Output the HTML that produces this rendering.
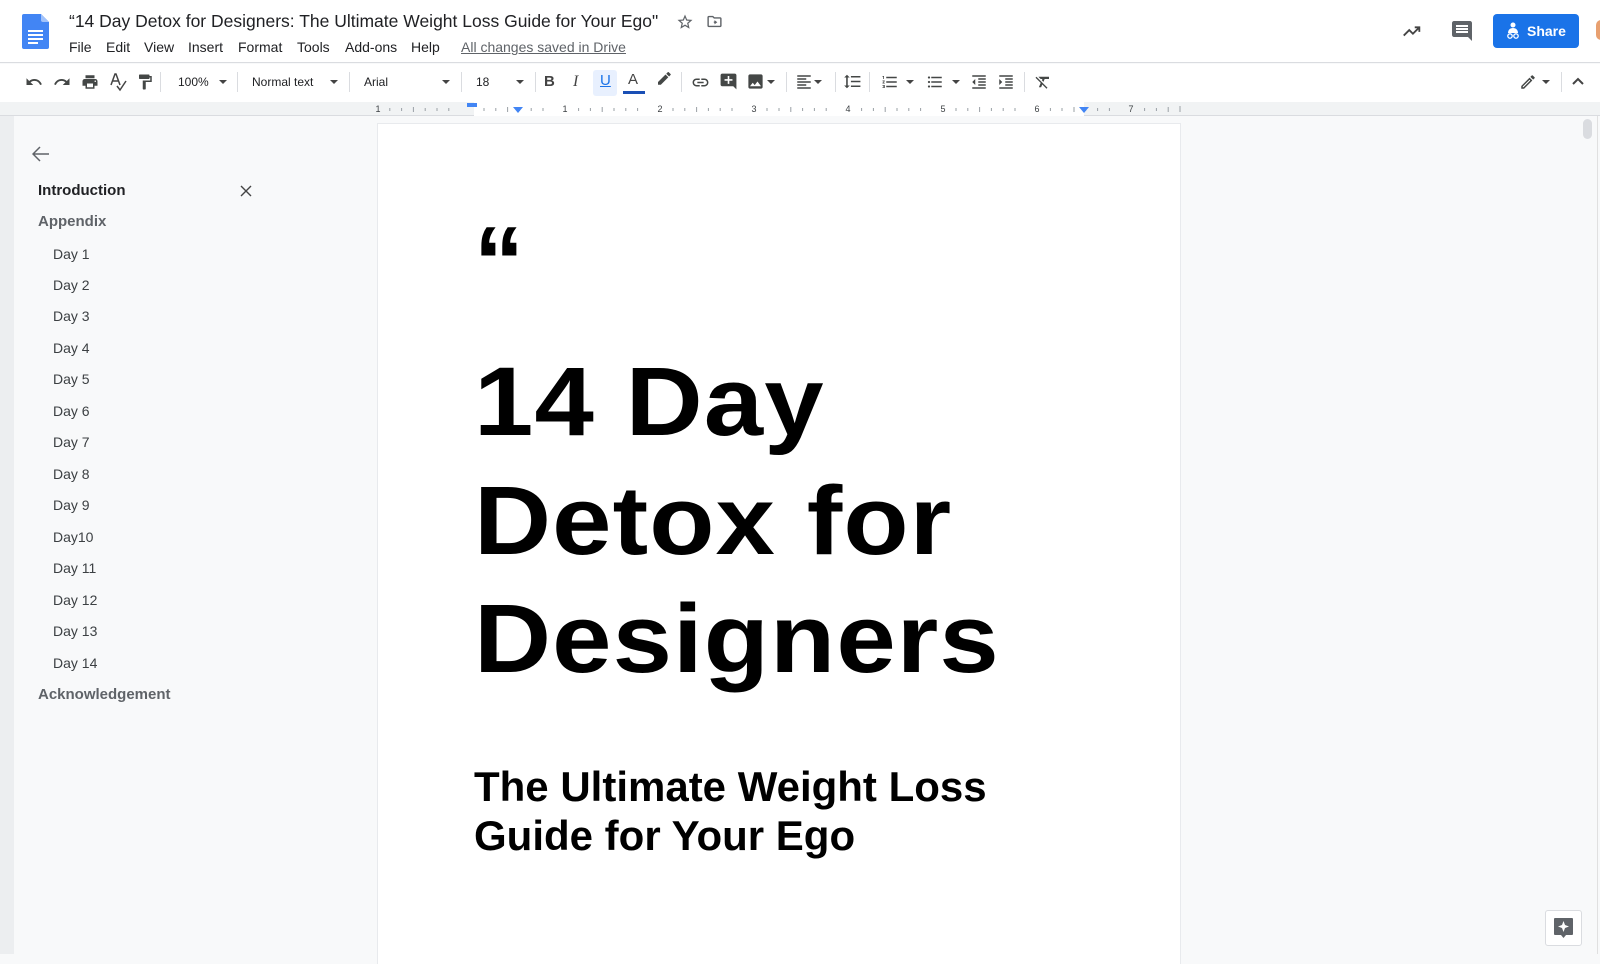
<!DOCTYPE html>
<html><head><meta charset="utf-8">
<style>
*{margin:0;padding:0;box-sizing:border-box}
body{width:1600px;height:954px;overflow:hidden;background:#f8f9fa;font-family:"Liberation Sans",Arial,sans-serif;position:relative;color:#202124}
.a{position:absolute}
.hdr{left:0;top:0;width:1600px;height:63px;background:#fff;border-bottom:1px solid #dadce0}
.tb{left:0;top:64px;width:1600px;height:38px;background:#fff}
.ic{position:absolute;fill:#444746}
.sep{position:absolute;top:72px;width:1px;height:20px;background:#dadce0}
.dd{position:absolute;top:80px;width:0;height:0;border-left:4px solid transparent;border-right:4px solid transparent;border-top:4px solid #444}
.tt{position:absolute;top:75px;font-size:12px;color:#202124}
.menu{position:absolute;top:39px;font-size:14px;color:#202124}
.ruler{left:0;top:102px;width:1600px;height:14px;background:#f1f3f4;border-bottom:1px solid #dadce0}
.sb{position:absolute;font-size:14px;color:#3c4043}
.h{position:absolute;font-size:15px;color:#5f6368;font-weight:bold}
.big{position:absolute;left:474px;font-weight:bold;font-size:97px;color:#000;line-height:1;white-space:nowrap;letter-spacing:1px;transform:scaleX(1.1);transform-origin:0 0}
.sub{position:absolute;left:474px;font-weight:bold;font-size:42px;color:#000;line-height:1;white-space:nowrap}
</style></head><body>
<div class="a hdr"></div>
<svg class="a" style="left:22px;top:14px" width="27" height="35" viewBox="0 0 27 35"><path d="M2 0h17l8 8v25a2 2 0 0 1-2 2H2a2 2 0 0 1-2-2V2a2 2 0 0 1 2-2z" fill="#4285f4"/><path d="M19 0l8 8h-6a2 2 0 0 1-2-2z" fill="#a1c2fa"/><rect x="6" y="16" width="15" height="2" fill="#fff"/><rect x="6" y="20" width="15" height="2" fill="#fff"/><rect x="6" y="24" width="15" height="2" fill="#fff"/><rect x="6" y="28" width="10" height="2" fill="#fff"/></svg>
<div class="a" style="left:69px;top:11px;font-size:17.5px;color:#202124;white-space:nowrap">“14 Day Detox for Designers: The Ultimate Weight Loss Guide for Your Ego"</div>
<svg class="a" style="left:676px;top:13px" width="18" height="18" viewBox="0 0 24 24"><path d="M22 9.24l-7.19-.62L12 2 9.19 8.63 2 9.24l5.46 4.73L5.82 21 12 17.27 18.18 21l-1.63-7.03L22 9.24zM12 15.4l-3.76 2.27 1-4.28-3.32-2.88 4.38-.38L12 6.1l1.71 4.04 4.38.38-3.32 2.88 1 4.28L12 15.4z" fill="#5f6368"/></svg>
<svg class="a" style="left:706px;top:13px" width="17" height="17" viewBox="0 0 24 24"><path d="M20 6h-8l-2-2H4c-1.1 0-2 .9-2 2v12c0 1.1.9 2 2 2h16c1.1 0 2-.9 2-2V8c0-1.1-.9-2-2-2zm0 12H4V6h5.17l2 2H20v10zm-8-4h-1v-2h1V10l4 3-4 3z" fill="#5f6368"/></svg>
<div class="menu" style="left:69px">File</div>
<div class="menu" style="left:106px">Edit</div>
<div class="menu" style="left:144px">View</div>
<div class="menu" style="left:188px">Insert</div>
<div class="menu" style="left:238px">Format</div>
<div class="menu" style="left:297px">Tools</div>
<div class="menu" style="left:345px">Add-ons</div>
<div class="menu" style="left:411px">Help</div>
<div class="menu" style="left:461px;color:#5f6368;text-decoration:underline">All changes saved in Drive</div>
<svg class="a" style="left:1401px;top:20px" width="22" height="22" viewBox="0 0 24 24"><path d="M3 17l6-6 4 4 7-7M15 8h5v5" fill="none" stroke="#444" stroke-width="2"/></svg>
<svg class="a" style="left:1450px;top:19px" width="24" height="24" viewBox="0 0 24 24"><path d="M21.99 4c0-1.1-.89-2-1.99-2H4c-1.1 0-2 .9-2 2v12c0 1.1.9 2 2 2h14l4 4-.01-18zM18 14H6v-2h12v2zm0-3H6V9h12v2zm0-3H6V6h12v2z" fill="#5f6368"/></svg>
<div class="a" style="left:1493px;top:14px;width:86px;height:34px;background:#1a73e8;border-radius:4px;color:#fff;font-weight:bold;font-size:14px;line-height:34px;padding-left:34px">Share</div>
<svg class="a" style="left:1505px;top:22px" width="16" height="18" viewBox="0 0 16 18"><circle cx="8" cy="3" r="2.5" fill="#fff"/><path d="M3 11c0-3 2-5 5-5s5 2 5 5z" fill="#fff"/><circle cx="5" cy="14" r="2.2" fill="none" stroke="#fff" stroke-width="1.3"/><circle cx="11" cy="14" r="2.2" fill="none" stroke="#fff" stroke-width="1.3"/></svg>
<div class="a" style="left:1596px;top:20px;width:10px;height:20px;border-radius:10px;background:#e8a070"></div>

<div class="a tb"></div>
<svg class="ic" style="left:25px;top:73px" width="18" height="18" viewBox="0 0 24 24"><path d="M12.5 8c-2.65 0-5.05.99-6.9 2.6L2 7v9h9l-3.62-3.62c1.39-1.16 3.16-1.88 5.12-1.88 3.54 0 6.55 2.31 7.6 5.5l2.37-.78C21.08 11.03 17.15 8 12.5 8z"/></svg>
<svg class="ic" style="left:53px;top:73px" width="18" height="18" viewBox="0 0 24 24"><path d="M18.4 10.6C16.55 8.99 14.15 8 11.5 8c-4.65 0-8.58 3.03-9.96 7.22L3.9 16c1.05-3.19 4.05-5.5 7.6-5.5 1.95 0 3.73.72 5.12 1.88L13 16h9V7l-3.6 3.6z"/></svg>
<svg class="ic" style="left:81px;top:73px" width="18" height="18" viewBox="0 0 24 24"><path d="M19 8H5c-1.66 0-3 1.34-3 3v6h4v4h12v-4h4v-6c0-1.66-1.34-3-3-3zm-3 11H8v-5h8v5zm3-7c-.55 0-1-.45-1-1s.45-1 1-1 1 .45 1 1-.45 1-1 1zm-1-9H6v4h12V3z"/></svg>
<svg class="a" style="left:109px;top:72px" width="18" height="20" viewBox="0 0 18 20"><path d="M2 13L6 2h1l4 11M3.5 9h6M8 14l3 4 6-9" fill="none" stroke="#444" stroke-width="1.5"/></svg>
<svg class="ic" style="left:136px;top:73px" width="18" height="18" viewBox="0 0 24 24"><path d="M18 4V3c0-.55-.45-1-1-1H5c-.55 0-1 .45-1 1v4c0 .55.45 1 1 1h12c.55 0 1-.45 1-1V6h1v4H9v11c0 .55.45 1 1 1h2c.55 0 1-.45 1-1v-9h8V4h-3z"/></svg>
<div class="sep" style="left:160px"></div>
<div class="tt" style="left:178px">100%</div><div class="dd" style="left:219px"></div>
<div class="sep" style="left:237px"></div>
<div class="tt" style="left:252px">Normal text</div><div class="dd" style="left:330px"></div>
<div class="sep" style="left:349px"></div>
<div class="tt" style="left:364px">Arial</div><div class="dd" style="left:442px"></div>
<div class="sep" style="left:461px"></div>
<div class="tt" style="left:476px">18</div><div class="dd" style="left:516px"></div>
<div class="sep" style="left:535px"></div>
<div class="a" style="left:544px;top:73px;font-weight:bold;font-size:15px;color:#444">B</div>
<div class="a" style="left:573px;top:73px;font-style:italic;font-size:16px;color:#444;font-family:'Liberation Serif',serif">I</div>
<div class="a" style="left:593px;top:70px;width:24px;height:26px;background:#e8f0fe;border-radius:3px"></div>
<div class="a" style="left:600px;top:72px;font-size:15px;color:#1a73e8;text-decoration:underline">U</div>
<div class="a" style="left:628px;top:71px;font-size:15px;color:#444">A</div>
<div class="a" style="left:623px;top:91px;width:22px;height:3px;background:#1a4fb5"></div>
<svg class="ic" style="left:655px;top:72px" width="18" height="18" viewBox="0 0 24 24"><path d="M17.75 7L14 3.25l-10 10V17h3.75l10-10zm2.96-2.96a.996.996 0 0 0 0-1.41L18.37.29a.996.996 0 0 0-1.41 0L15 2.25 18.75 6l1.96-1.96z"/></svg>
<div class="sep" style="left:681px"></div>
<svg class="ic" style="left:691px;top:73px" width="19" height="19" viewBox="0 0 24 24"><path d="M3.9 12c0-1.71 1.39-3.1 3.1-3.1h4V7H7c-2.76 0-5 2.24-5 5s2.24 5 5 5h4v-1.9H7c-1.71 0-3.1-1.39-3.1-3.1zM8 13h8v-2H8v2zm9-6h-4v1.9h4c1.71 0 3.1 1.39 3.1 3.1s-1.39 3.1-3.1 3.1h-4V17h4c2.76 0 5-2.24 5-5s-2.24-5-5-5z"/></svg>
<svg class="ic" style="left:719px;top:72px" width="19" height="19" viewBox="0 0 24 24"><path d="M20 2H4c-1.1 0-2 .9-2 2v12c0 1.1.9 2 2 2h14l4 4V4c0-1.1-.9-2-2-2zm-3 9h-4v4h-2v-4H7V9h4V5h2v4h4v2z"/></svg>
<svg class="ic" style="left:746px;top:72px" width="19" height="19" viewBox="0 0 24 24"><path d="M21 19V5c0-1.1-.9-2-2-2H5c-1.1 0-2 .9-2 2v14c0 1.1.9 2 2 2h14c1.1 0 2-.9 2-2zM8.5 13.5l2.5 3.01L14.5 12l4.5 6H5l3.5-4.5z"/></svg>
<div class="dd" style="left:767px"></div>
<div class="sep" style="left:786px"></div>
<svg class="ic" style="left:795px;top:73px" width="18" height="18" viewBox="0 0 24 24"><path d="M15 15H3v2h12v-2zm0-8H3v2h12V7zM3 13h18v-2H3v2zm0 8h18v-2H3v2zM3 3v2h18V3H3z"/></svg>
<div class="dd" style="left:814px"></div>
<div class="sep" style="left:835px"></div>
<svg class="ic" style="left:843px;top:72px" width="19" height="19" viewBox="0 0 24 24"><path d="M6 7h2.5L5 3.5 1.5 7H4v10H1.5L5 20.5 8.5 17H6V7zm4-2v2h12V5H10zm0 14h12v-2H10v2zm0-6h12v-2H10v2z"/></svg>
<div class="sep" style="left:869px"></div>
<svg class="ic" style="left:881px;top:73px" width="18" height="18" viewBox="0 0 24 24"><path d="M2 17h2v.5H3v1h1v.5H2v1h3v-4H2v1zm1-9h1V4H2v1h1v3zm-1 3h1.8L2 13.1v.9h3v-1H3.2L5 10.9V10H2v1zm5-6v2h14V5H7zm0 14h14v-2H7v2zm0-6h14v-2H7v2z"/></svg>
<div class="dd" style="left:906px"></div>
<svg class="ic" style="left:926px;top:73px" width="18" height="18" viewBox="0 0 24 24"><path d="M4 10.5c-.83 0-1.5.67-1.5 1.5s.67 1.5 1.5 1.5 1.5-.67 1.5-1.5-.67-1.5-1.5-1.5zm0-6c-.83 0-1.5.67-1.5 1.5S3.17 7.5 4 7.5 5.5 6.83 5.5 6 4.83 4.5 4 4.5zm0 12c-.83 0-1.5.68-1.5 1.5s.68 1.5 1.5 1.5 1.5-.68 1.5-1.5-.67-1.5-1.5-1.5zM7 19h14v-2H7v2zm0-6h14v-2H7v2zm0-8v2h14V5H7z"/></svg>
<div class="dd" style="left:952px"></div>
<svg class="ic" style="left:970px;top:73px" width="18" height="18" viewBox="0 0 24 24"><path d="M11 17h10v-2H11v2zm-8-5l4 4V8l-4 4zm0 9h18v-2H3v2zM3 3v2h18V3H3zm8 6h10V7H11v2zm0 4h10v-2H11v2z"/></svg>
<svg class="ic" style="left:997px;top:73px" width="18" height="18" viewBox="0 0 24 24"><path d="M3 21h18v-2H3v2zM3 8v8l4-4-4-4zm8 9h10v-2H11v2zM3 3v2h18V3H3zm8 6h10V7H11v2zm0 4h10v-2H11v2z"/></svg>
<div class="sep" style="left:1024px"></div>
<svg class="ic" style="left:1034px;top:73px" width="18" height="18" viewBox="0 0 24 24"><path d="M3.27 5L2 6.27l6.97 6.97L6.5 19h3l1.57-3.66L16.73 21 18 19.73 3.55 5.27 3.27 5zM6 5v.18L8.82 8h2.4l-.72 1.68 2.1 2.1L14.21 8H20V5H6z"/></svg>
<svg class="ic" style="left:1519px;top:73px" width="18" height="18" viewBox="0 0 24 24"><path d="M3 17.25V21h3.75L17.81 9.94l-3.75-3.75L3 17.25zM5.92 19H5v-.92l9.06-9.06.92.92L5.92 19zM20.71 7.04a.996.996 0 0 0 0-1.41l-2.34-2.34a.996.996 0 0 0-1.41 0l-1.83 1.83 3.75 3.75 1.83-1.83z"/></svg>
<div class="dd" style="left:1542px"></div>
<div class="sep" style="left:1561px"></div>
<svg class="a" style="left:1571px;top:76px" width="14" height="10" viewBox="0 0 14 10"><path d="M2 8l5-5 5 5" fill="none" stroke="#444" stroke-width="2"/></svg>

<div class="a ruler"></div>
<div class="a" style="left:474px;top:102px;width:610px;height:14px;background:#fff"></div>
<svg class="a" style="left:370px;top:102px" width="820" height="14">
<g stroke="#9aa0a6" stroke-width="1">
<path d="M19.8 6v3M31.6 6v3M43.4 5v5M55.2 6v3M67 6v3M78.8 6v3M114 6v3M125.8 6v3M137.6 5v5M149.4 6v3M161.2 6v3M173 6v3M208.6 6v3M220.4 6v3M232.2 5v5M244 6v3M255.8 6v3M267.6 6v3M303 6v3M314.8 6v3M326.6 5v5M338.4 6v3M350.2 6v3M362 6v3M397 6v3M409 6v3M420.8 5v5M432.6 6v3M444.4 6v3M456.2 6v3M491.6 6v3M503.4 6v3M515.2 5v5M527 6v3M538.8 6v3M550.6 6v3M586 6v3M597.8 6v3M609.6 5v5M621.4 6v3M633.2 6v3M645 6v3M680.4 6v3M692 6v3M704 5v5M715.6 6v3M727.6 6v3M739.4 6v3M774.6 6v3M786.4 6v3M798.2 5v5M810 4v6"/>
</g>
<g font-size="9" fill="#3c4043" font-family="Liberation Sans,sans-serif" text-anchor="middle">
<text x="8" y="10">1</text><text x="195" y="10">1</text><text x="290" y="10">2</text><text x="384" y="10">3</text><text x="478" y="10">4</text><text x="573" y="10">5</text><text x="667" y="10">6</text><text x="761" y="10">7</text>
</g>
<rect x="97" y="1" width="10" height="4" fill="#4285f4"/>
<path d="M143 5h10l-5 6z M709 5h10l-5 6z" fill="#4285f4"/>
</svg>

<div class="a" style="left:0;top:116px;width:14px;height:838px;background:#eceef0"></div>
<svg class="a" style="left:32px;top:146px" width="18" height="16" viewBox="0 0 18 16"><path d="M17 8H2M8 1L1 8l7 7" fill="none" stroke="#5f6368" stroke-width="1.5"/></svg>
<div class="a" style="left:38px;top:182px;font-size:15px;color:#202124;font-weight:bold">Introduction</div>
<svg class="a" style="left:240px;top:185px" width="12" height="12" viewBox="0 0 12 12"><path d="M1 1l10 10M11 1L1 11" stroke="#444" stroke-width="1.4"/></svg>
<div class="h" style="left:38px;top:213px">Appendix</div>
<div class="sb" style="left:53px;top:246px">Day 1</div>
<div class="sb" style="left:53px;top:277px">Day 2</div>
<div class="sb" style="left:53px;top:308px">Day 3</div>
<div class="sb" style="left:53px;top:340px">Day 4</div>
<div class="sb" style="left:53px;top:371px">Day 5</div>
<div class="sb" style="left:53px;top:403px">Day 6</div>
<div class="sb" style="left:53px;top:434px">Day 7</div>
<div class="sb" style="left:53px;top:466px">Day 8</div>
<div class="sb" style="left:53px;top:497px">Day 9</div>
<div class="sb" style="left:53px;top:529px">Day10</div>
<div class="sb" style="left:53px;top:560px">Day 11</div>
<div class="sb" style="left:53px;top:592px">Day 12</div>
<div class="sb" style="left:53px;top:623px">Day 13</div>
<div class="sb" style="left:53px;top:655px">Day 14</div>
<div class="h" style="left:38px;top:686px">Acknowledgement</div>

<div class="a" style="left:378px;top:124px;width:802px;height:840px;background:#fff;box-shadow:0 0 0 1px #e8eaed"></div>
<div class="a" style="left:474px;top:212px;font-size:100px;font-weight:bold;color:#000;line-height:1">“</div>
<div class="big" style="top:353px">14 Day</div>
<div class="big" style="top:472px">Detox for</div>
<div class="big" style="top:590px">Designers</div>
<div class="sub" style="top:766px">The Ultimate Weight Loss</div>
<div class="sub" style="top:815px">Guide for Your Ego</div>

<div class="a" style="left:1597px;top:116px;width:1px;height:838px;background:#e0e0e0"></div>
<div class="a" style="left:1583px;top:119px;width:9px;height:20px;border-radius:5px;background:#dadce0"></div>
<div class="a" style="left:1545px;top:910px;width:37px;height:36px;background:#fff;border:1px solid #dadce0;border-radius:3px"></div>
<svg class="a" style="left:1554px;top:918px" width="19" height="20" viewBox="0 0 19 20"><rect x="0" y="0" width="19" height="17" rx="1" fill="#5f6368"/><path d="M7 17h5l-2.5 3z" fill="#5f6368"/><path d="M9.5 3l1.5 4 4 1.5-4 1.5-1.5 4-1.5-4-4-1.5 4-1.5z" fill="#fff"/></svg>
</body></html>
